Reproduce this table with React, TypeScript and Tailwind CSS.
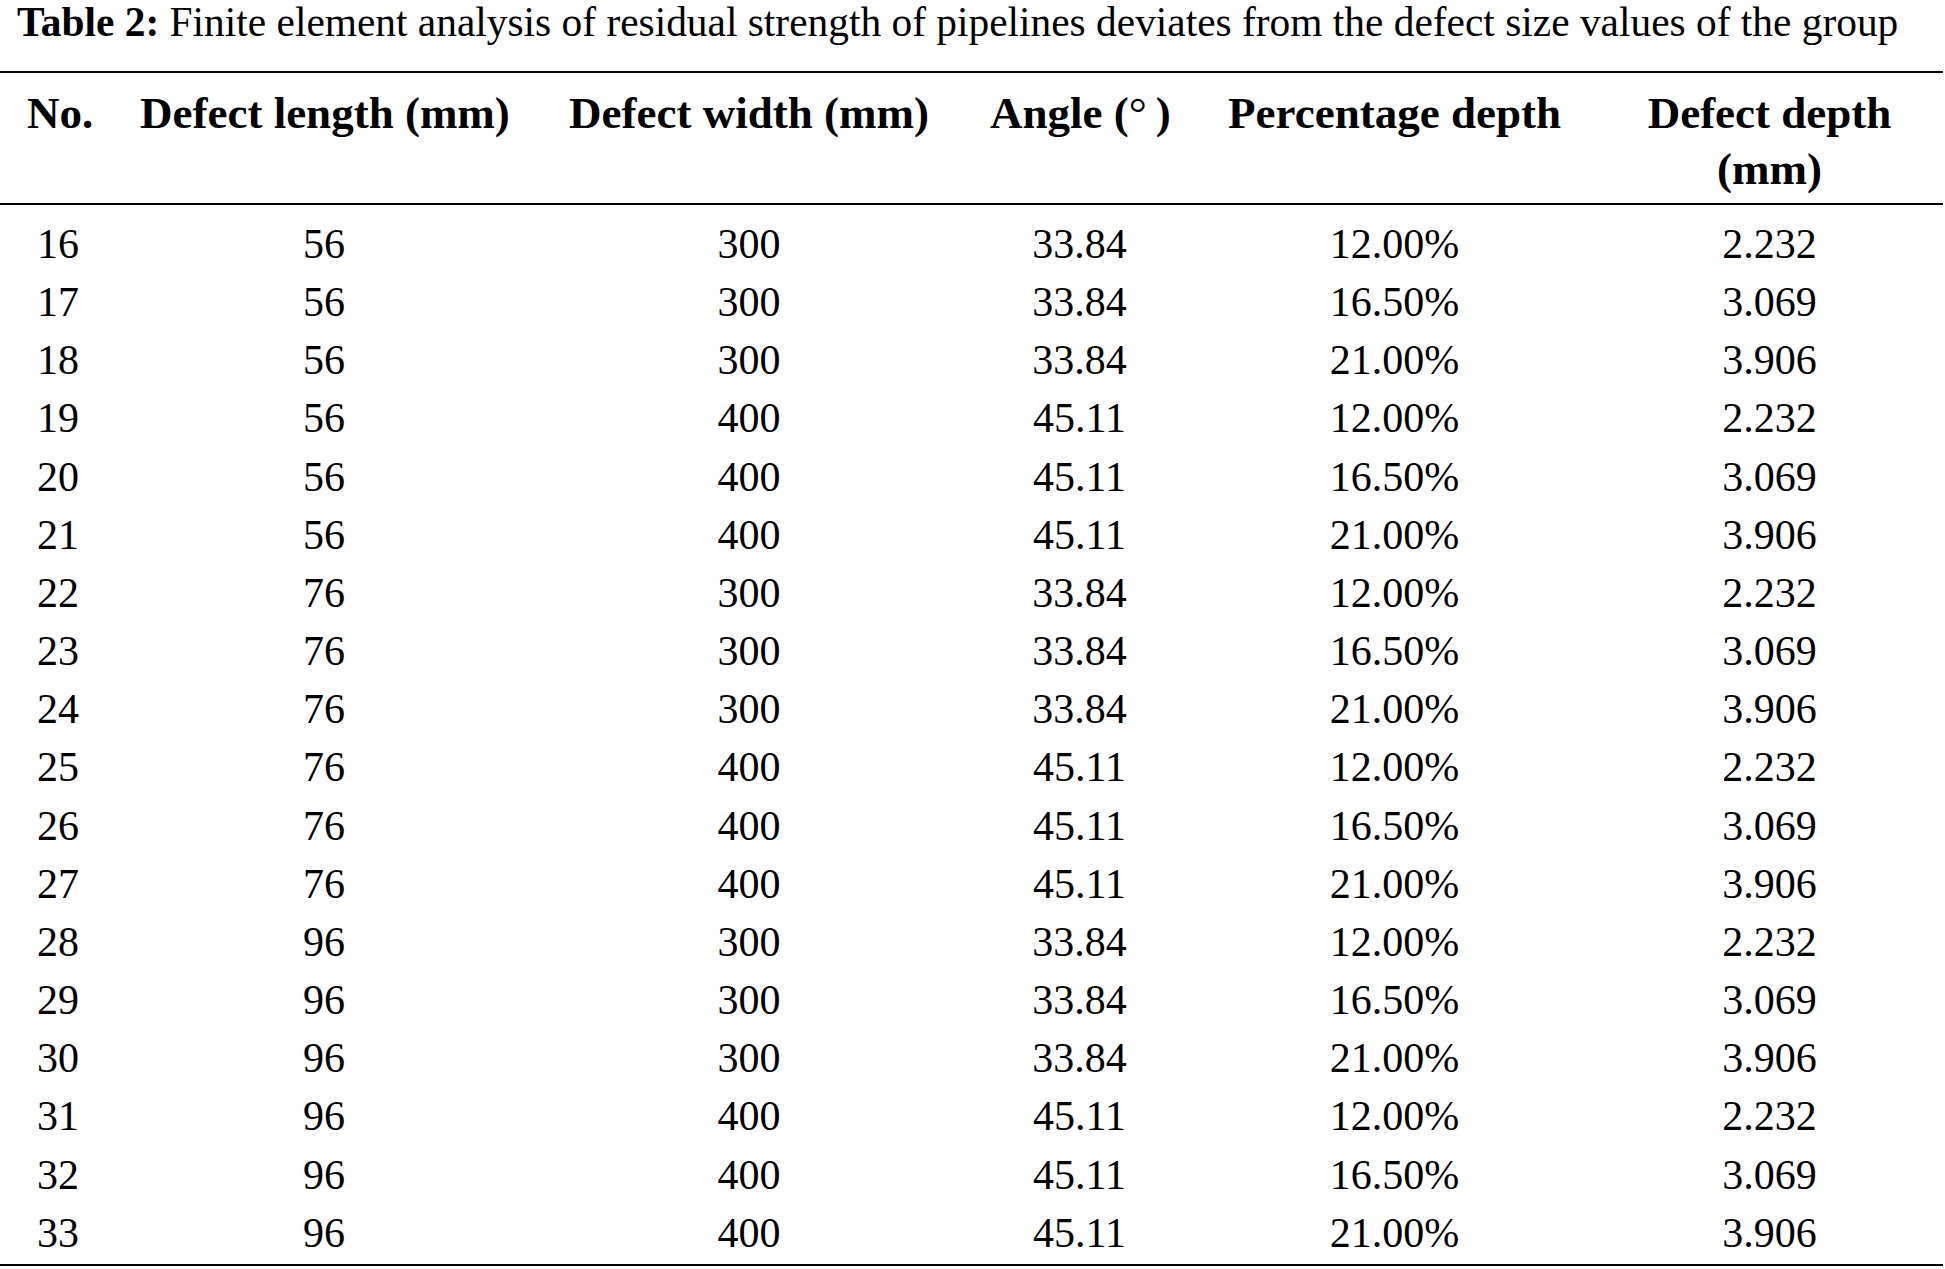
import React from "react";

const rows: [string, string, string, string, string, string][] = [
  ["16", "56", "300", "33.84", "12.00%", "2.232"],
  ["17", "56", "300", "33.84", "16.50%", "3.069"],
  ["18", "56", "300", "33.84", "21.00%", "3.906"],
  ["19", "56", "400", "45.11", "12.00%", "2.232"],
  ["20", "56", "400", "45.11", "16.50%", "3.069"],
  ["21", "56", "400", "45.11", "21.00%", "3.906"],
  ["22", "76", "300", "33.84", "12.00%", "2.232"],
  ["23", "76", "300", "33.84", "16.50%", "3.069"],
  ["24", "76", "300", "33.84", "21.00%", "3.906"],
  ["25", "76", "400", "45.11", "12.00%", "2.232"],
  ["26", "76", "400", "45.11", "16.50%", "3.069"],
  ["27", "76", "400", "45.11", "21.00%", "3.906"],
  ["28", "96", "300", "33.84", "12.00%", "2.232"],
  ["29", "96", "300", "33.84", "16.50%", "3.069"],
  ["30", "96", "300", "33.84", "21.00%", "3.906"],
  ["31", "96", "400", "45.11", "12.00%", "2.232"],
  ["32", "96", "400", "45.11", "16.50%", "3.069"],
  ["33", "96", "400", "45.11", "21.00%", "3.906"],
];

const grid = "grid grid-cols-[140px_368px_482px_179px_451px_299px]";

export default function App() {
  return (
    <div
      className="w-[1945px] h-[1269px] bg-white text-black overflow-hidden"
      style={{ fontFamily: '"Liberation Serif", "Times New Roman", serif' }}
    >
      <div className="pt-[2px] pl-[17px] text-[41.4px] leading-[41px] whitespace-nowrap">
        <span className="font-bold">Table 2:</span> Finite element analysis of residual strength of pipelines deviates from the defect size values of the group
      </div>
      <div className="mt-[28px] w-[1943px] border-t-2 border-b-2 border-black">
        <div className={`${grid} pt-[12px] pb-[6px] border-b-2 border-black text-[45px] leading-[56px] font-bold whitespace-nowrap`}>
          <div className="pl-[27px]">No.</div>
          <div className="text-center">Defect length (mm)</div>
          <div className="text-center">Defect width (mm)</div>
          <div className="text-center">
            Angle (<span className="font-normal">°</span>&#8201;)
          </div>
          <div className="text-center">Percentage depth</div>
          <div className="text-center">
            Defect depth
            <br />
            (mm)
          </div>
        </div>
        <div className="pt-[10px] pb-[2px] text-[42px] leading-[58.15px]">
          {rows.map((r) => (
            <div key={r[0]} className={grid}>
              <div className="pl-[37px]">{r[0]}</div>
              <div className="text-center">{r[1]}</div>
              <div className="text-center">{r[2]}</div>
              <div className="text-center">{r[3]}</div>
              <div className="text-center">{r[4]}</div>
              <div className="text-center">{r[5]}</div>
            </div>
          ))}
        </div>
      </div>
    </div>
  );
}
